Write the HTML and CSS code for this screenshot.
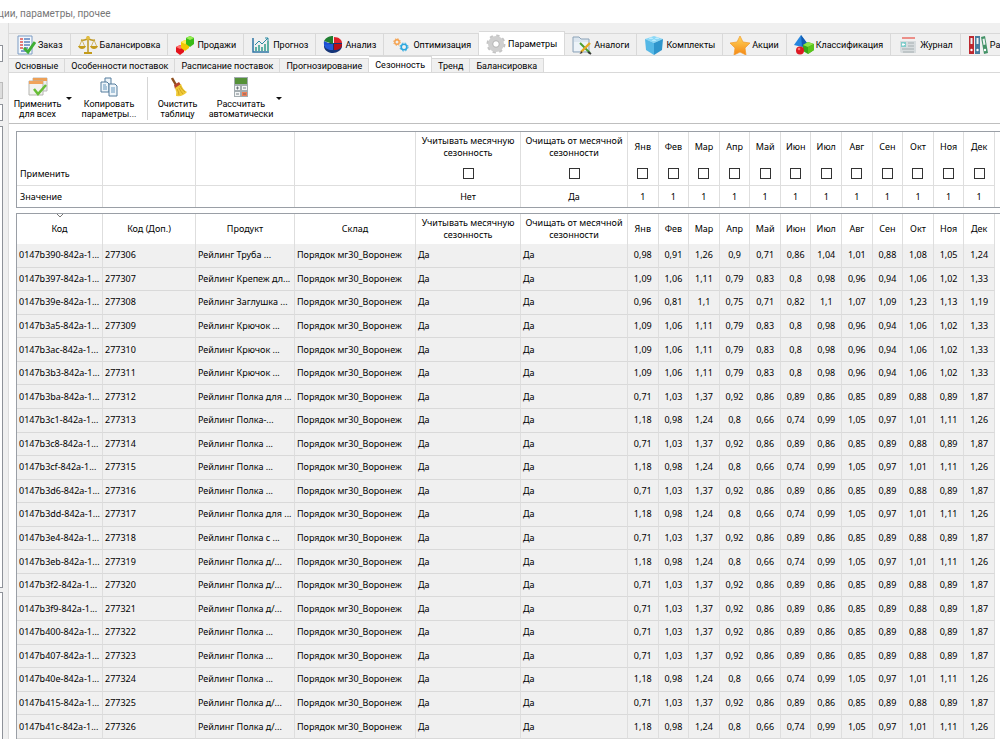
FILE: index.html
```
<!DOCTYPE html>
<html lang="ru">
<head>
  <meta charset="UTF-8" />
  <meta name="viewport" content="width=device-width, initial-scale=1.0"/>
  <title>Параметры: Сезонность</title>
  <link rel="stylesheet" href="styles.css">
</head>
<body>

  <header class="titlebar">ции, параметры, прочее</header>

  <div class="workspace">
    <!-- Край левой панели -->
    <div class="side">
      <div class="side-field"></div>
      <div class="side-field side-button"></div>
      <div class="side-field side-combo"></div>
      <div class="side-list"></div>
      <div class="side-list side-list-last"></div>
    </div>

    <main class="panel">
      <!-- Основные вкладки -->
      <nav class="tabs">
        <button class="tab">
          <svg viewBox="0 0 20 20"><path d="M2 1h14v18H2z" fill="#f4f8fd" stroke="#7d9cc4"/><path d="M4 4h3M4 7h3M4 10h3M4 13h3" stroke="#e0524d" stroke-width="1.5"/><path d="M8 4h6M8 7h6M8 10h6M8 13h4M5 16h5" stroke="#5b83bd" stroke-width="1.5"/><path d="M8 13l4 4 7-10" fill="none" stroke="#3fae35" stroke-width="3"/></svg>
          Заказ
        </button>
        <button class="tab">
          <svg viewBox="0 0 20 20"><path d="M10 1v16M3 5c4 1 5-1 7-1s3 2 7 1" fill="none" stroke="#bd961f" stroke-width="1.5"/><path d="M4 5l-3 7M4 5l3 7M16 5l-3 7M16 5l3 7" stroke="#c9a944" stroke-width=".8"/><path d="M0 11h8q-1 3-4 3t-4-3zM12 11h8q-1 3-4 3t-4-3zM6 17h8v2H6z" fill="#c49b1b"/><circle cx="10" cy="3" r="2" fill="#e1bd43"/></svg>
          Балансировка
        </button>
        <button class="tab">
          <svg viewBox="0 0 20 20"><path d="M1 12l4-2 4 2v5l-4 3-4-3z" fill="#e3131c"/><path d="M1 12l4-2 4 2-4 2z" fill="#ff7771"/><path d="M6 7l4-2 4 2v6l-4 3-4-3z" fill="#f2c900"/><path d="M6 7l4-2 4 2-4 2z" fill="#ffec58"/><path d="M11 3l4-2 4 2v6l-4 3-4-3z" fill="#39bb17"/><path d="M11 3l4-2 4 2-4 2z" fill="#98ed55"/></svg>
          Продажи
        </button>
        <button class="tab">
          <svg viewBox="0 0 20 20"><path d="M2 3v14h16" fill="none" stroke="#2e75a4" stroke-width="1.5"/><path d="M5 16v-4M8 16v-6M11 16v-4M14 16V9M17 16V6" stroke="#3ba292" stroke-width="1.6"/><path d="M4 10l4-4 3 3 6-6M14 3h3v3" fill="none" stroke="#2b8aa2"/></svg>
          Прогноз
        </button>
        <button class="tab">
          <svg viewBox="0 0 20 20"><path d="M1 8v4c1 4 5 6 9 6s9-3 9-7V8z" fill="#143478"/><path d="M10 10L1 6c-1 5 2 9 8 9z" fill="#1c4ed2"/><path d="M10 9L1 6c2-4 6-5 9-5z" fill="#207f31"/><path d="M11 8V2c5 0 8 3 8 6z" fill="#e0222a"/><path d="M11 9h8c0 4-3 6-8 6z" fill="#b90e18"/><path d="M10 9v6c-5 0-8-2-9-5z" fill="#235bd9"/></svg>
          Анализ
        </button>
        <button class="tab">
          <svg viewBox="0 0 20 20"><circle cx="6" cy="7" r="2.2" fill="none" stroke="#f5a04a" stroke-width="1.4"/><circle cx="6" cy="7" r="3.3" fill="none" stroke="#f5a04a" stroke-dasharray="1.3 1.3"/><circle cx="13" cy="12" r="2.8" fill="none" stroke="#2aa7de" stroke-width="1.6"/><circle cx="13" cy="12" r="4" fill="none" stroke="#2aa7de" stroke-dasharray="1.6 1.6"/></svg>
          Оптимизация
        </button>
        <button class="tab tab-active">
          <svg viewBox="0 0 20 20"><circle cx="10" cy="10" r="8" fill="none" stroke="#c4c4c4" stroke-width="3" stroke-dasharray="3.1 3.18"/><circle cx="10" cy="10" r="5.500" fill="none" stroke="#cfcfcf" stroke-width="5"/><circle cx="10" cy="10" r="3.300" fill="#fff" stroke="#b2b2b2"/></svg>
          Параметры
        </button>
        <button class="tab">
          <svg viewBox="0 0 20 20"><path d="M1 2h6l2 2h8v13H1z" fill="#dce6ef" stroke="#8ca3b8"/><path d="M2 7h14v9H2z" fill="#edf3f8"/><path d="M8 8l10 10" stroke="#4a9e30" stroke-width="2"/><path d="M18 8l-9 9" stroke="#e5ab22" stroke-width="2.4"/><path d="M9.500 16l-2 3 3-1z" fill="#403528"/><path d="M16 17l3 2" stroke="#333" stroke-width="2"/></svg>
          Аналоги
        </button>
        <button class="tab">
          <svg viewBox="0 0 20 20"><path d="M1 4l9-3 9 3-9 4z" fill="#8bd8f6"/><path d="M1 4l9 4v12l-8-5z" fill="#55b8e6"/><path d="M19 4l-9 4v12l8-5z" fill="#2f95cc"/><path d="M5 4c0-2 4-2 4 0M11 4c0-2 4-2 4 0M8 6c0-2 4-2 4 0" fill="#bdecff"/></svg>
          Комплекты
        </button>
        <button class="tab">
          <svg viewBox="0 0 20 20"><defs><linearGradient id="gold" x2="0" y2="1"><stop stop-color="#ffd75b"/><stop offset="1" stop-color="#f58814"/></linearGradient></defs><path d="M10 1l3 6 7 1-5 5 1 7-6-3-6 3 1-7-5-5 7-1z" fill="url(#gold)" stroke="#f09a2b" stroke-width=".7"/></svg>
          Акции
        </button>
        <button class="tab">
          <svg viewBox="0 0 20 20"><path d="M7 0l6 8-5 4-8-2z" fill="#2686df"/><path d="M7 0l1 12 5-4z" fill="#125bb2"/><path d="M9 10l5-3 6 2v6l-6 4-5-3z" fill="#38a716"/><path d="M9 10l5-3 6 2-6 3z" fill="#8ee347"/><path d="M14 12v7l6-4V9z" fill="#5ac51b"/><circle cx="6" cy="15.500" r="4" fill="#dd1924"/><circle cx="5" cy="14" r="1.300" fill="#ff7770"/></svg>
          Классификация
        </button>
        <button class="tab">
          <svg viewBox="0 0 20 20"><path d="M2 6h16v12H4q-2 0-2-2z" fill="#d7dcde"/><path d="M4 3h13" stroke="#ec8f89" stroke-width="2"/><path d="M3 7h5v5H3z" fill="#82cdcb"/><path d="M10 8h6M10 11h6M4 14h12M5 17h11" stroke="#b6bdc0" stroke-width="1.500"/><path d="M5 8v3M4 9.500h3" stroke="#fff"/></svg>
          Журнал
        </button>
        <button class="tab">
          <svg viewBox="0 0 20 20"><path d="M1 1h5v18H1z" fill="#bc2930"/><path d="M7 1h5v18H7z" fill="#477e9f"/><path d="M13 2l4-1 3 17-4 1z" fill="#449267"/><path d="M2.500 3h2v6h-2zM8.500 3h2v6h-2zM14.500 4l2-.5 1 6-2 .5z" fill="#eef3f3"/><circle cx="3.500" cy="15" r="1.200" fill="#fff"/><circle cx="9.500" cy="15" r="1.200" fill="#fff"/><circle cx="17" cy="15" r="1.200" fill="#fff"/></svg>
          Распределение
        </button>
      </nav>

      <!-- Вкладки параметров -->
      <nav class="subtabs">
        <button class="subtab">Основные</button>
        <button class="subtab">Особенности поставок</button>
        <button class="subtab">Расписание поставок</button>
        <button class="subtab">Прогнозирование</button>
        <button class="subtab subtab-active">Сезонность</button>
        <button class="subtab">Тренд</button>
        <button class="subtab">Балансировка</button>
      </nav>

      <div class="toolbar">
        <button class="tool">
          <svg viewBox="0 0 20 20"><path d="M5 1h14v13H5z" fill="#eee" stroke="#bbb"/><path d="M5 1h14v3H5z" fill="#eda056"/><path d="M1 4h14v14H1z" fill="#f2f2f0" stroke="#b5b5b0"/><path d="M1 4h14v3H1z" fill="#f0a35b"/><path d="M6 12l4 5 8-9" fill="none" stroke="#67bd36" stroke-width="2.500"/></svg>
          <span>Применить<br/>для всех</span>
        </button>
        <button class="arrow" aria-label="Варианты применения"></button>
        <button class="tool tool-wide">
          <svg viewBox="0 0 20 20"><g fill="#eef5fa" stroke="#547c9d"><path d="M6 1h6v8H6z"/><path d="M2 5h6l2 2v8H2z"/><path d="M10 7h6l2 2v10h-8z"/></g><path d="M4 8h3M4 10h4M4 12h4M12 11h4M12 13h4M12 15h4" stroke="#6697bd"/></svg>
          <span>Копировать<br/>параметры...</span>
        </button>
        <div class="divider"></div>
        <button class="tool">
          <svg viewBox="0 0 20 20"><path d="M4 1l4 7" stroke="#8e4f1d" stroke-width="2.500"/><path d="M6 8l5-3 2 3-6 4z" fill="#b6452d"/><path d="M7 11l6-4q2 6 6 8-4 5-11 4 1-4-1-8z" fill="#f0ca36"/><path d="M9 12q2 3 2 6M11 11q2 4 4 6M12 9q2 4 5 6" fill="none" stroke="#c79b1c" stroke-width=".8"/></svg>
          <span>Очистить<br/>таблицу</span>
        </button>
        <button class="tool tool-wide">
          <svg viewBox="0 0 20 20"><path d="M3 0h14v20H3z" fill="#a3acb0"/><path d="M4 1h12v6H4z" fill="#549137"/><path d="M4 9h5v4H4zM11 9h5v4h-5zM4 15h5v4H4z" fill="#f3f5f5"/><path d="M11 15h5v4h-5z" fill="#f17e55"/><path d="M5 11h3M6.500 9.500v3M12 11h3M5 17h3M12 17h3" stroke="#56626a" stroke-width=".8"/></svg>
          <span>Рассчитать<br/>автоматически</span>
        </button>
        <button class="arrow" aria-label="Варианты расчёта"></button>
      </div>

      <div class="content">
        <div class="frame">
          <table class="grid apply">
            <colgroup><col class="c-code"><col class="c-extra"><col class="c-product"><col class="c-store"><col class="c-use"><col class="c-clean"><col span="12"></colgroup>
            <thead>
              <tr id="applyHead"><td></td><td></td><td></td><td></td></tr>
            </thead>
            <tbody>
              <tr id="applyChecks"><th>Применить</th><td></td><td></td><td></td></tr>
              <tr id="applyValues"><th>Значение</th><td></td><td></td><td></td></tr>
            </tbody>
          </table>
        </div>

        <div class="frame frame-fill">
          <table class="grid data">
            <colgroup><col class="c-code"><col class="c-extra"><col class="c-product"><col class="c-store"><col class="c-use"><col class="c-clean"><col span="12"></colgroup>
            <thead>
              <tr id="dataHead">
                <th class="sorted">Код<svg class="sort" viewBox="0 0 6 4"><path d="M0 0l3 3 3-3" fill="none" stroke="#777"/></svg></th>
                <th>Код (Доп.)</th><th>Продукт</th><th>Склад</th>
              </tr>
            </thead>
            <tbody id="rows"></tbody>
          </table>
        </div>
      </div>
    </main>
  </div>

  <script>
    const flags = ["Учитывать месячную сезонность", "Очищать от месячной сезонности"];
    const months = ["Янв", "Фев", "Мар", "Апр", "Май", "Июн", "Июл", "Авг", "Сен", "Окт", "Ноя", "Дек"];

    // Сезонные профили по месяцам
    const pipe = "0,98 0,91 1,26 0,9 0,71 0,86 1,04 1,01 0,88 1,08 1,05 1,24";
    const cap = "0,96 0,81 1,1 0,75 0,71 0,82 1,1 1,07 1,09 1,23 1,13 1,19";
    const hook = "1,09 1,06 1,11 0,79 0,83 0,8 0,98 0,96 0,94 1,06 1,02 1,33";
    const winter = "0,71 1,03 1,37 0,92 0,86 0,89 0,86 0,85 0,89 0,88 0,89 1,87";
    const shelf = "1,18 0,98 1,24 0,8 0,66 0,74 0,99 1,05 0,97 1,01 1,11 1,26";

    const items = [
      ["0147b390", "Труба ...", pipe],
      ["0147b397", "Крепеж дл...", hook],
      ["0147b39e", "Заглушка ...", cap],
      ["0147b3a5", "Крючок ...", hook],
      ["0147b3ac", "Крючок ...", hook],
      ["0147b3b3", "Крючок ...", hook],
      ["0147b3ba", "Полка для ...", winter],
      ["0147b3c1", "Полка-...", shelf],
      ["0147b3c8", "Полка ...", winter],
      ["0147b3cf", "Полка ...", shelf],
      ["0147b3d6", "Полка ...", winter],
      ["0147b3dd", "Полка для ...", shelf],
      ["0147b3e4", "Полка с ...", winter],
      ["0147b3eb", "Полка д/...", shelf],
      ["0147b3f2", "Полка д/...", winter],
      ["0147b3f9", "Полка д/...", winter],
      ["0147b400", "Полка ...", winter],
      ["0147b407", "Полка ...", winter],
      ["0147b40e", "Полка ...", shelf],
      ["0147b415", "Полка д/...", winter],
      ["0147b41c", "Полка д/...", shelf]
    ];

    const names = flags.concat(months);
    const heads = names.map(name => `<th>${name}</th>`).join("");
    document.getElementById("applyHead").innerHTML += heads;
    document.getElementById("dataHead").innerHTML += heads;

    document.getElementById("applyChecks").innerHTML += names
      .map(name => `<td><input type="checkbox" class="check" aria-label="${name}"></td>`).join("");
    document.getElementById("applyValues").innerHTML += names
      .map((name, i) => `<td>${i === 0 ? "Нет" : i === 1 ? "Да" : "1"}</td>`).join("");

    document.getElementById("rows").innerHTML = items.map(([code, name, profile], i) => `
      <tr>
        <td>${code}-842a-1...</td>
        <td>${277306 + i}</td>
        <td>Рейлинг ${name}</td>
        <td>Порядок мг30_Воронеж</td>
        <td>Да</td>
        <td>Да</td>
        ${profile.split(" ").map(value => `<td class="num">${value}</td>`).join("")}
      </tr>`).join("");
  </script>

</body>
</html>
```
FILE: styles.css
```
* {
  box-sizing: border-box;
}

body {
  display: flex;
  flex-direction: column;
  min-height: 100vh;
  margin: 0;
  overflow: hidden;
  background-color: #f0f0f0;
  color: #000;
  font-family: 'Noto Sans', 'Open Sans', sans-serif;
  font-size: 9px;
}

button {
  margin: 0;
  border: none;
  background: none;
  color: inherit;
  font-family: Roboto, sans-serif;
  font-size: 9px;
  white-space: nowrap;
}

.titlebar {
  height: 23px;
  padding-top: 5px;
  background-color: #fff;
  color: #777;
  font-family: Roboto, sans-serif;
  font-size: 10px;
  line-height: 18px;
  text-indent: -2px;
}

.workspace {
  display: flex;
  flex: 1;
}

/* левая панель */
.side {
  display: flex;
  flex-direction: column;
  flex: none;
  width: 9px;
  padding: 22px 2px 0 0;
  border-right: 1px solid #dcdcdc;
}

.side-field,
.side-list {
  width: 3px;
  height: 17px;
  border: 1px solid #8e9299;
  border-left: none;
  background-color: #fff;
}

.side-button {
  margin-top: 20px;
  border-color: #bbb;
  background-color: #ddd;
}

.side-combo {
  margin: 5px 0;
}

.side-list {
  flex: 1;
}

.side-list-last {
  flex: 0 0 147px;
  margin-top: 4px;
  border-bottom: none;
}

.panel {
  display: flex;
  flex-direction: column;
  flex: 1;
  min-width: 0;
  background-color: #fff;
}

/* вкладки */
.tabs {
  display: flex;
  align-items: flex-end;
  height: 33px;
  border-bottom: 1px solid #d9d9d9;
  background-color: #f0f0f0;
  overflow: hidden;
}

.tab {
  display: flex;
  align-items: center;
  flex: none;
  gap: 2px;
  height: 22px;
  padding: 0 7px;
  border-top: 1px solid #d9d9d9;
  border-right: 1px solid #d9d9d9;
}

.tab svg {
  width: 20px;
  height: 20px;
}

.tab-active {
  height: 24px;
  background-color: #fff;
}

.subtabs {
  display: flex;
  align-items: flex-end;
  height: 17px;
  border-bottom: 1px solid #d9d9d9;
}

.subtab {
  height: 14px;
  padding: 0 6px;
  border-top: 1px solid #d9d9d9;
  border-right: 1px solid #d9d9d9;
  background-color: #f0f0f0;
}

.subtab-active {
  height: 16px;
  background-color: #fff;
}

/* панель инструментов */
.toolbar {
  display: flex;
  height: 51px;
  padding: 4px 0 3px;
  border-bottom: 1px solid #bfbfbf;
}

.tool {
  display: flex;
  flex-direction: column;
  align-items: center;
  gap: 2px;
  width: 57px;
  padding: 0;
  line-height: 10px;
}

.tool-wide {
  width: 70px;
}

.tool svg {
  width: 20px;
  height: 20px;
}

.arrow {
  width: 8px;
  padding: 0;
}

.arrow::before {
  content: "";
  display: block;
  width: 0;
  border: 3px solid transparent;
  border-top-color: #111;
  border-bottom: none;
}

.divider {
  width: 1px;
  margin: 0 1px 0 3px;
  background-color: #d5d5d5;
}

/* таблицы */
.content {
  display: flex;
  flex-direction: column;
  flex: 1;
  gap: 5px;
  padding: 7px 0 0 7px;
}

.frame {
  padding-right: 5px;
  border: 1px solid #9a9fa6;
  border-right: none;
}

.frame-fill {
  display: flex;
  flex: 1;
  border-bottom: none;
}

.grid {
  width: 100%;
  border-collapse: separate;
  border-spacing: 0;
  table-layout: fixed;
  line-height: 12px;
}

.c-code { width: 86px; }
.c-extra { width: 93px; }
.c-product { width: 99px; }
.c-store { width: 121px; }
.c-use { width: 105px; }
.c-clean { width: 107px; }

.grid th,
.grid td {
  padding: 0;
  border-right: 1px solid #dedede;
  font-weight: normal;
  text-align: center;
  white-space: nowrap;
}

.grid thead th {
  height: 30px;
  white-space: normal;
}

.apply tbody th {
  height: 21px;
  padding-left: 3px;
  text-align: left;
}

.apply tbody tr:first-child > * {
  height: 24px;
  border-bottom: 1px solid #dedede;
}

.check {
  display: block;
  width: 11px;
  height: 11px;
  margin: 0 auto;
  appearance: none;
  border: 1px solid #333;
  background-color: #fff;
}

.check:checked {
  background-color: #333;
}

.data tbody {
  background-color: #f0f0f0;
}

.data tbody td {
  height: 23px;
  padding-left: 2px;
  border-bottom: 1px solid #d9d9d9;
  text-align: left;
}

.data tbody .num {
  padding-left: 0;
  text-align: center;
}

.sorted {
  position: relative;
}

.sort {
  position: absolute;
  top: 0;
  left: 50%;
  width: 6px;
  height: 4px;
  margin-left: -3px;
}
```
